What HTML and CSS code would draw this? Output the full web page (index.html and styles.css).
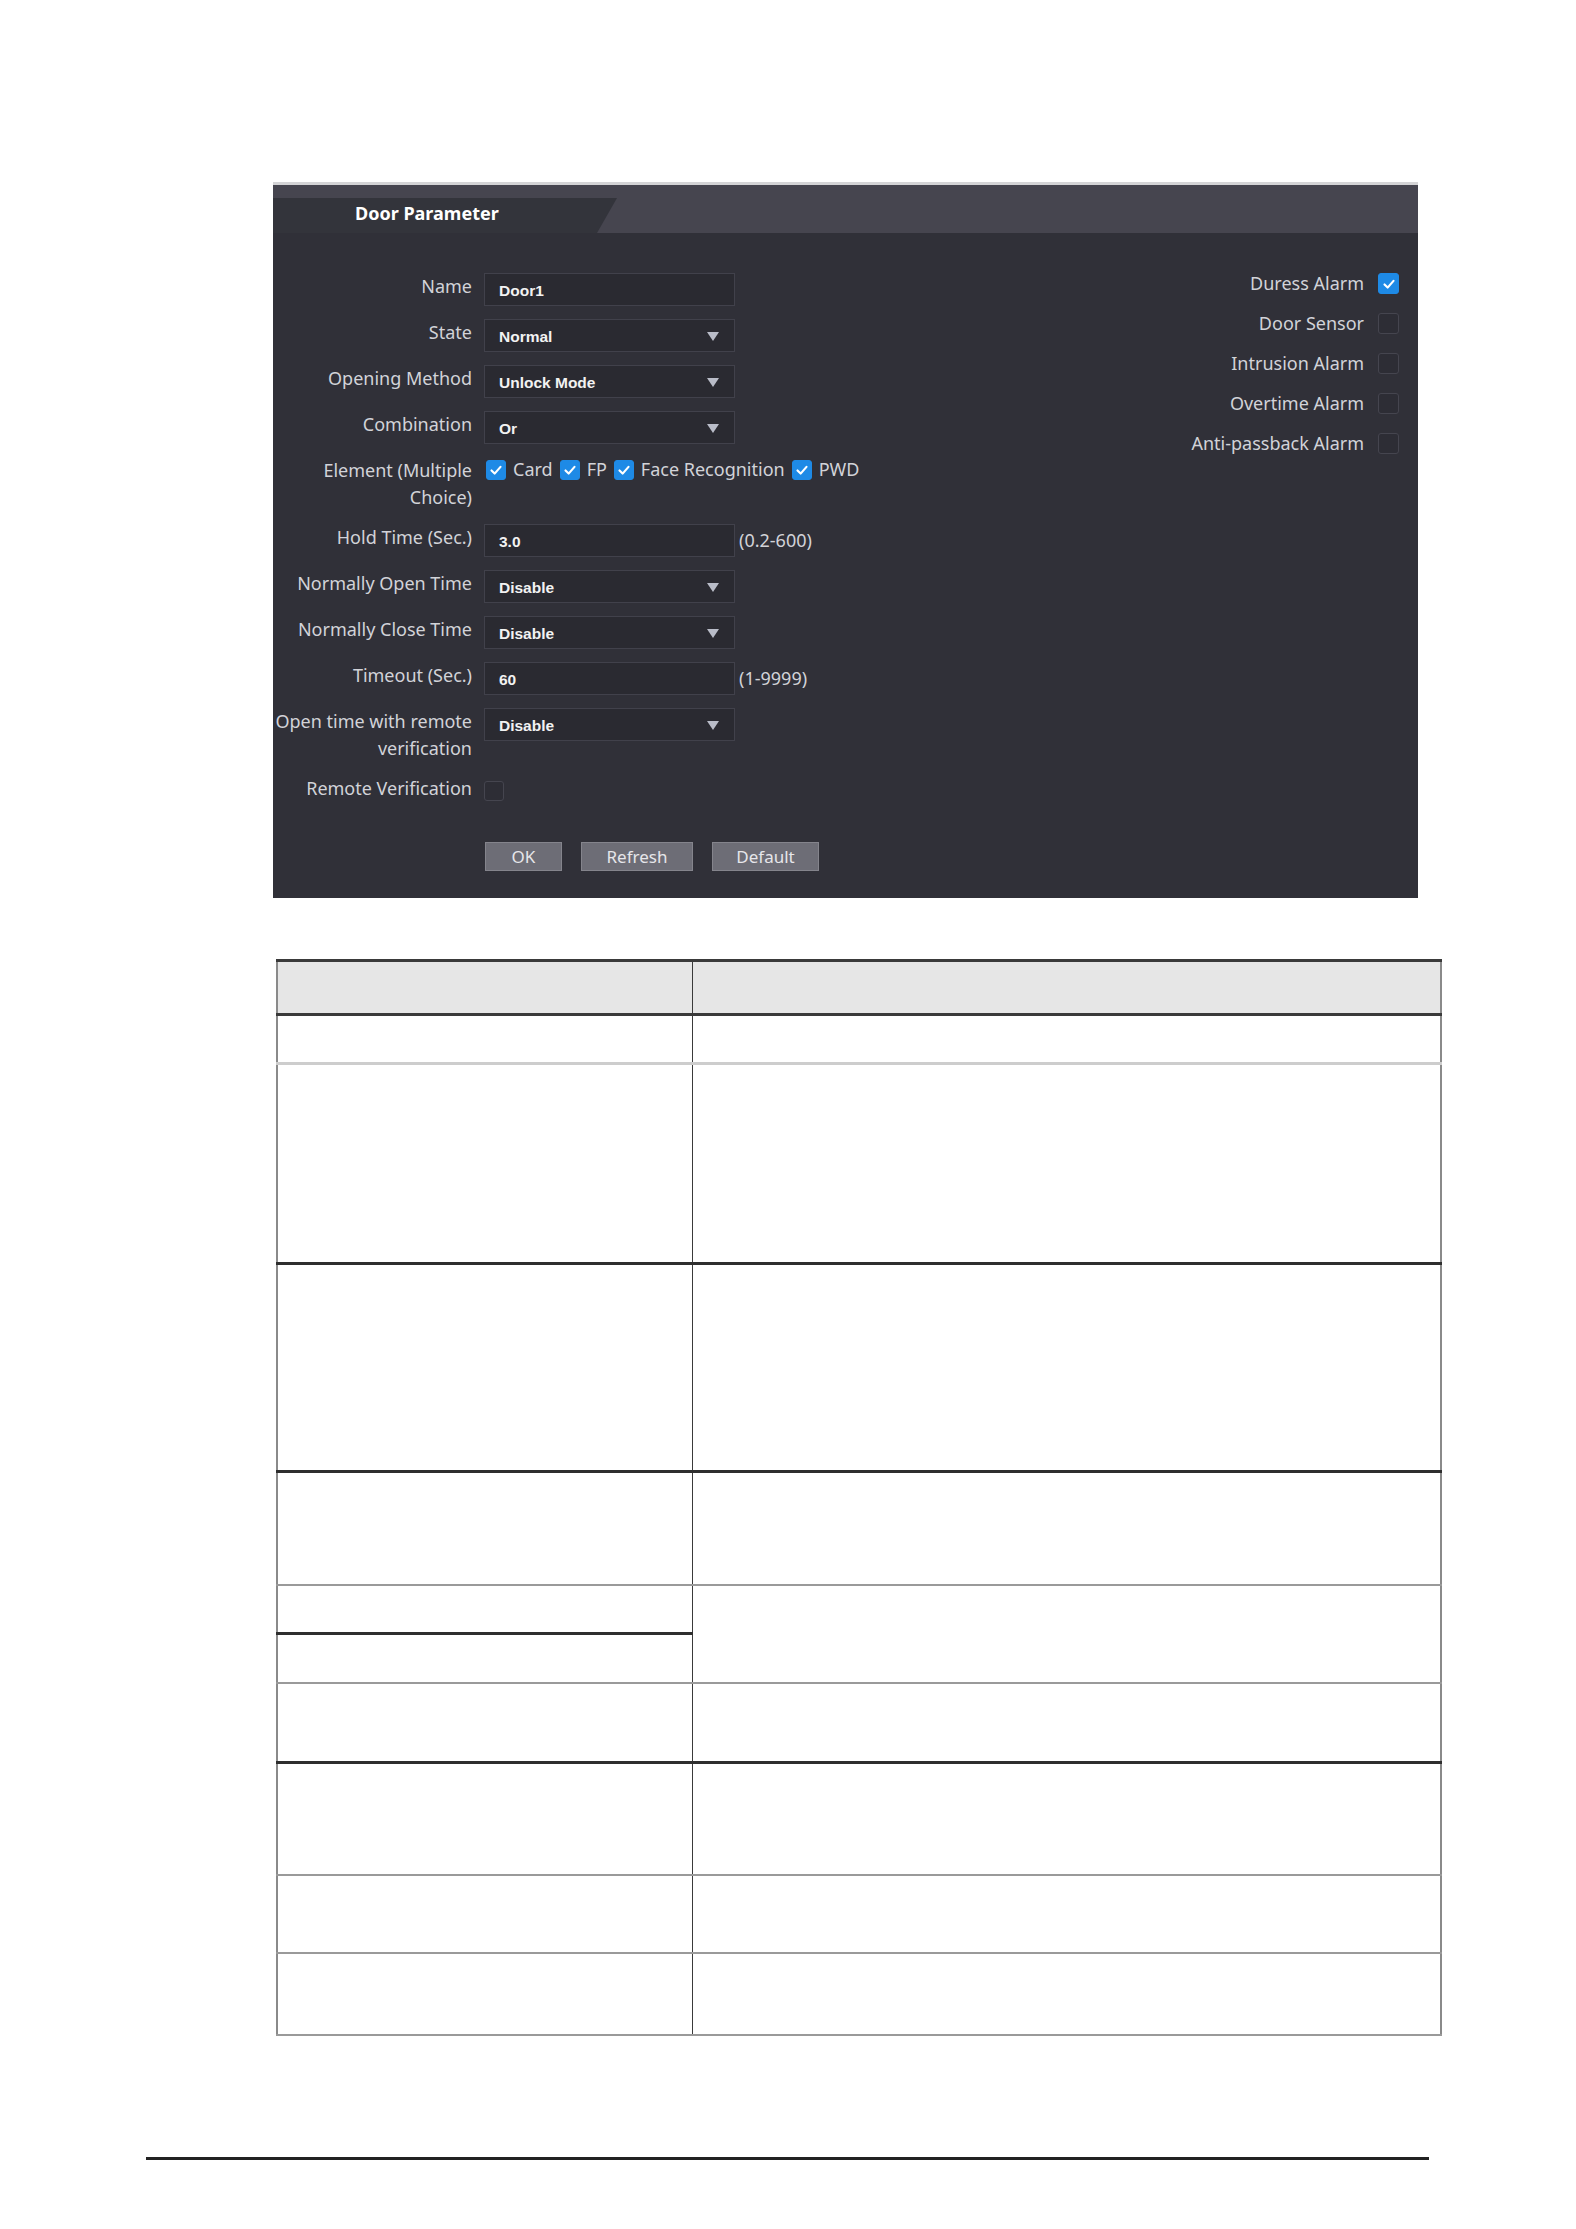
FILE: index.html
```html
<!DOCTYPE html>
<html>
<head>
<meta charset="utf-8">
<title>Door Parameter</title>
<link rel="stylesheet" href="styles.css">
</head>
<body>
<div class="page">
  <section class="panel">
    <div class="panel-head">
      <div class="tab">Door Parameter</div>
    </div>
    <div class="panel-body">
      <div class="form">
        <div class="row">
          <div class="label">Name</div>
          <div class="input">Door1</div>
        </div>
        <div class="row">
          <div class="label">State</div>
          <div class="input select">Normal<span class="arrow"></span></div>
        </div>
        <div class="row">
          <div class="label">Opening Method</div>
          <div class="input select">Unlock Mode<span class="arrow"></span></div>
        </div>
        <div class="row">
          <div class="label">Combination</div>
          <div class="input select">Or<span class="arrow"></span></div>
        </div>
        <div class="row">
          <div class="label">Element (Multiple<br>Choice)</div>
          <div class="checks">
            <span class="opt"><span class="cb on"><svg viewBox="0 0 20 20"><polyline points="5,10.5 8.5,14 15,6.5"/></svg></span>Card</span>
            <span class="opt"><span class="cb on"><svg viewBox="0 0 20 20"><polyline points="5,10.5 8.5,14 15,6.5"/></svg></span>FP</span>
            <span class="opt"><span class="cb on"><svg viewBox="0 0 20 20"><polyline points="5,10.5 8.5,14 15,6.5"/></svg></span>Face Recognition</span>
            <span class="opt"><span class="cb on"><svg viewBox="0 0 20 20"><polyline points="5,10.5 8.5,14 15,6.5"/></svg></span>PWD</span>
          </div>
        </div>
        <div class="row">
          <div class="label">Hold Time (Sec.)</div>
          <div class="input">3.0</div>
          <div class="hint">(0.2-600)</div>
        </div>
        <div class="row">
          <div class="label">Normally Open Time</div>
          <div class="input select">Disable<span class="arrow"></span></div>
        </div>
        <div class="row">
          <div class="label">Normally Close Time</div>
          <div class="input select">Disable<span class="arrow"></span></div>
        </div>
        <div class="row">
          <div class="label">Timeout (Sec.)</div>
          <div class="input">60</div>
          <div class="hint">(1-9999)</div>
        </div>
        <div class="row">
          <div class="label">Open time with remote<br>verification</div>
          <div class="input select">Disable<span class="arrow"></span></div>
        </div>
        <div class="row">
          <div class="label">Remote Verification</div>
          <div class="single"><span class="cb"></span></div>
        </div>
        <div class="buttons">
          <button class="btn btn-ok">OK</button>
          <button class="btn btn-refresh">Refresh</button>
          <button class="btn btn-default">Default</button>
        </div>
      </div>
      <div class="alarms">
        <div class="alarm">Duress Alarm<span class="cb on big"><svg viewBox="0 0 20 20"><polyline points="5,10.5 8.5,14 15,6.5"/></svg></span></div>
        <div class="alarm">Door Sensor<span class="cb big"></span></div>
        <div class="alarm">Intrusion Alarm<span class="cb big"></span></div>
        <div class="alarm">Overtime Alarm<span class="cb big"></span></div>
        <div class="alarm">Anti-passback Alarm<span class="cb big"></span></div>
      </div>
    </div>
  </section>

  <table class="params">
    <colgroup><col class="c1"><col class="c2"></colgroup>
    <tr class="r-head"><td></td><td></td></tr>
    <tr class="r1 b-light"><td></td><td></td></tr>
    <tr class="r2 b-thick"><td></td><td></td></tr>
    <tr class="r3 b-thick"><td></td><td></td></tr>
    <tr class="r4 b-gray"><td></td><td></td></tr>
    <tr class="r5a"><td class="b-thick-cell"></td><td rowspan="2" class="b-gray-cell"></td></tr>
    <tr class="r5b"><td class="b-gray-cell"></td></tr>
    <tr class="r6 b-thick"><td></td><td></td></tr>
    <tr class="r7 b-gray"><td></td><td></td></tr>
    <tr class="r8 b-gray"><td></td><td></td></tr>
    <tr class="r9 b-gray"><td></td><td></td></tr>
  </table>

  <div class="footer-line"></div>
</div>
</body>
</html>
```
FILE: styles.css
```css
html, body {
  margin: 0;
  padding: 0;
  background: #ffffff;
}

.page {
  width: 1576px;
  min-height: 2229px;
  font-family: "Noto Sans", "Open Sans", sans-serif;
  overflow: hidden;
}

/* ---------- panel ---------- */
.panel {
  margin: 182px 0 0 273px;
  width: 1145px;
  background: #303038;
  border-top: 3px solid #d4d4d6;
}

.panel-head {
  height: 48px;
  background: #46454f;
  display: flex;
  align-items: flex-end;
}

.tab {
  width: 344px;
  height: 35px;
  box-sizing: border-box;
  padding-left: 82px;
  background: #33343b;
  clip-path: polygon(0 0, 344px 0, 324px 100%, 0 100%);
  color: #ffffff;
  font-weight: 700;
  font-size: 18px;
  line-height: 31px;
}

.panel-body {
  display: flex;
  justify-content: space-between;
  align-items: flex-start;
  padding: 40px 19px 27px 0;
}

.form {
  display: flex;
  flex-direction: column;
}

.row {
  display: flex;
  align-items: flex-start;
  margin-bottom: 13px;
}

.label {
  width: 199px;
  text-align: right;
  color: #d2d3d8;
  font-size: 18px;
  line-height: 27px;
  margin-right: 12px;
  flex: none;
}

.input {
  position: relative;
  width: 251px;
  height: 33px;
  box-sizing: border-box;
  background: #2a2a31;
  border: 1px solid #41414b;
  padding-left: 14px;
  color: #f2f2f2;
  font-family: "Liberation Sans", Arial, sans-serif;
  font-weight: 700;
  font-size: 15.5px;
  line-height: 33px;
}

.arrow {
  position: absolute;
  right: 15px;
  top: 12px;
  width: 0;
  height: 0;
  border-left: 6px solid transparent;
  border-right: 6px solid transparent;
  border-top: 9px solid #b9bcc8;
}

.hint {
  margin-left: 4px;
  color: #d2d3d8;
  font-size: 18px;
  line-height: 33px;
}

.checks {
  display: flex;
  align-items: center;
  gap: 7px;
  height: 27px;
  margin-left: 2px;
}

.opt {
  display: flex;
  align-items: center;
  gap: 7px;
  color: #d2d3d8;
  font-size: 18px;
  line-height: 27px;
  margin-top: -2px;
}

.cb {
  display: inline-flex;
  align-items: center;
  justify-content: center;
  width: 20px;
  height: 20px;
  box-sizing: border-box;
  border: 1px solid #45454f;
  border-radius: 3px;
  background: #2d2d35;
  flex: none;
}

.cb.on {
  background: #1e8ae6;
  border-color: #1e8ae6;
}

.cb svg {
  width: 18px;
  height: 18px;
}

.cb svg polyline {
  fill: none;
  stroke: #ffffff;
  stroke-width: 2.4;
  stroke-linecap: round;
  stroke-linejoin: round;
}

.single {
  display: flex;
  align-items: center;
  height: 27px;
  margin-top: 2px;
}

.buttons {
  display: flex;
  gap: 19px;
  margin: 25px 0 0 212px;
}

.btn {
  height: 29px;
  box-sizing: border-box;
  background: #6d6d76;
  border: 1px solid #84848c;
  color: #e6e6ea;
  font-family: "Noto Sans", sans-serif;
  font-size: 17px;
  line-height: 25px;
  padding: 0;
}

.btn-ok { width: 77px; }
.btn-refresh { width: 112px; }
.btn-default { width: 107px; }

.alarms {
  display: flex;
  flex-direction: column;
  gap: 19px;
}

.alarm {
  display: flex;
  justify-content: flex-end;
  align-items: center;
  gap: 14px;
  color: #d2d3d8;
  font-size: 18px;
  line-height: 21px;
}

.cb.big {
  width: 21px;
  height: 21px;
}

/* ---------- table ---------- */
.params {
  margin: 61px 0 0 276px;
  width: 1166px;
  border-collapse: collapse;
  table-layout: fixed;
}

.params col.c1 { width: 415px; }

.params td {
  padding: 0;
  border-left: 1px solid #3a3a3a;
  border-right: 1px solid #3a3a3a;
}

.params td:first-child {
  border-left: 2px solid #8a8a8a;
}

.params tr > td:last-child {
  border-right: 2px solid #8a8a8a;
}

.params tr.r5b td {
  border-right: 1px solid #3a3a3a;
}

.r-head td {
  height: 51px;
  background: #e6e6e6;
  border-top: 3px solid #3a3a3a;
  border-bottom: 3px solid #3a3a3a;
}

.r1 td { height: 46px; }
.r2 td { height: 197px; }
.r3 td { height: 205px; }
.r4 td { height: 111px; }
.r5a td { height: 46px; }
.r5b td { height: 47px; }
.r6 td { height: 77px; }
.r7 td { height: 110px; }
.r8 td { height: 76px; }
.r9 td { height: 80px; }

.b-light td { border-bottom: 3px solid #cdcdcd; }
.b-thick td { border-bottom: 3px solid #2e2e2e; }
.b-gray td { border-bottom: 2px solid #9a9a9a; }
.b-thick-cell { border-bottom: 3px solid #2e2e2e; }
.b-gray-cell { border-bottom: 2px solid #9a9a9a; }

/* ---------- footer ---------- */
.footer-line {
  margin: 121px 0 0 146px;
  width: 1283px;
  border-top: 3px solid #222222;
}
```
